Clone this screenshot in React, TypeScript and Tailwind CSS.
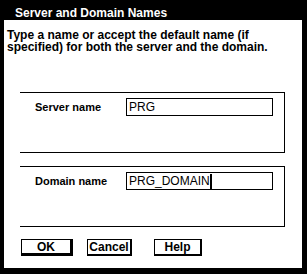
import React from 'react';

interface NameField {
  label: string;
  value: string;
  caret?: boolean;
}

const fields: NameField[] = [
  { label: 'Server name', value: 'PRG' },
  { label: 'Domain name', value: 'PRG_DOMAIN', caret: true },
];

const buttons = [
  { label: 'OK', className: 'w-[52px] border border-black border-r-[3px] border-b-[3px]' },
  { label: 'Cancel', className: 'w-[45px] ml-[14px] border border-black border-r-2 border-b-2' },
  { label: 'Help', className: 'w-[48px] ml-[22px] border border-black border-r-2 border-b-2' },
];

const App = () => {
  return (
    <div className="w-[307px] h-[274px] bg-black flex flex-col pl-[4px] pr-[5px] pb-[6px] font-['Liberation_Sans',Arial,sans-serif] text-black">
      <div className="h-[20px] pl-[11px] pt-[6px] text-white text-[12px] font-bold leading-[14px]">
        Server and Domain Names
      </div>

      <div className="flex-1 bg-white flex flex-col">
        <p className="pl-[3px] pt-[9px] w-[285px] text-[12px] font-bold leading-[12px]">
          Type a name or accept the default name (if specified) for both the server and the domain.
        </p>

        <div className="flex flex-col gap-[13px] mt-[39px] ml-[16px]">
          {fields.map((field) => (
            <div
              key={field.label}
              className="w-[265px] h-[61px] border-t border-r border-b border-black flex items-start pt-[5px]"
            >
              <span className="w-[106px] pl-[15px] pt-[3px] text-[11px] font-bold leading-[12px]">
                {field.label}
              </span>
              <div className="w-[147px] h-[18px] border border-black flex items-center pl-[2px] text-[12px] leading-[14px]">
                {field.value}
                {field.caret && <span className="w-[2px] h-[15px] bg-black" />}
              </div>
            </div>
          ))}
        </div>

        <div className="flex mt-[12px] ml-[17px]">
          {buttons.map((button) => (
            <div
              key={button.label}
              className={`${button.className} h-[17px] flex items-center justify-center text-[12px] font-bold leading-[14px]`}
            >
              {button.label}
            </div>
          ))}
        </div>
      </div>
    </div>
  );
};

export default App;
